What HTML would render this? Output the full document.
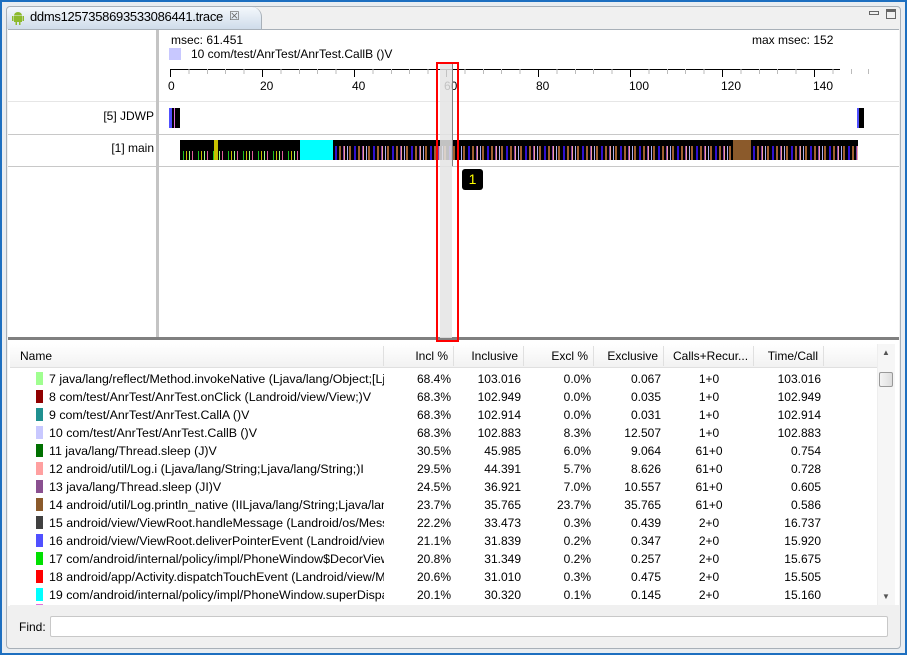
<!DOCTYPE html>
<html><head><meta charset="utf-8"><style>
*{margin:0;padding:0;box-sizing:border-box}
body{width:907px;height:655px;overflow:hidden;background:#fff;font-family:"Liberation Sans",sans-serif;font-size:12px;color:#000;position:relative}
.a{position:absolute}
.r{text-align:right}
.c{text-align:center}
</style></head><body>
<div class="a" style="left:0;top:0;width:907px;height:655px;border:2px solid #1d6fc0;background:#e9edf1"></div>
<div class="a" style="left:6px;top:6px;width:895px;height:643px;border:1px solid #a8b0b8;border-radius:4px;background:#f0f0f0"></div>
<div class="a" style="left:7px;top:7px;width:255px;height:22px;background:linear-gradient(#f4f8fc,#cfdcea);border-right:1px solid #a8b0b8;border-top-left-radius:4px;border-top-right-radius:10px"></div>
<svg class="a" style="left:10px;top:10px" width="16" height="16" viewBox="0 0 16 16"><rect x="4" y="6" width="8" height="6" fill="#8cba2c"/><path d="M4 5.5a4 3.5 0 0 1 8 0z" fill="#8cba2c"/><rect x="2" y="6" width="1.5" height="5" fill="#8cba2c"/><rect x="12.5" y="6" width="1.5" height="5" fill="#8cba2c"/><rect x="5.5" y="12" width="1.5" height="3" fill="#8cba2c"/><rect x="9" y="12" width="1.5" height="3" fill="#8cba2c"/></svg>
<div class="a" style="left:30px;top:9px;font-size:13px;letter-spacing:-0.3px">ddms1257358693533086441.trace</div>
<div class="a" style="left:229px;top:9px;font-size:12px;color:#666">☒</div>
<div class="a" style="left:869px;top:11px;width:10px;height:4px;border:1px solid #666"></div>
<div class="a" style="left:886px;top:9px;width:10px;height:10px;border:1px solid #666;border-top-width:3px"></div>
<div class="a" style="left:8px;top:29px;width:891px;height:577px;background:#fff;border-top:1px solid #a8b0b8"></div>
<div class="a" style="left:8px;top:101px;width:891px;height:1px;background:#e6e6e6"></div>
<div class="a" style="left:8px;top:134px;width:891px;height:1px;background:#c8c8c8"></div>
<div class="a" style="left:8px;top:166px;width:891px;height:1px;background:#c8c8c8"></div>
<div class="a" style="left:156px;top:30px;width:3px;height:308px;background:#c4c4c4"></div>
<div class="a" style="left:8px;top:337px;width:891px;height:3px;background:#808080"></div>
<div class="a" style="left:171px;top:33px;font-size:12px">msec: 61.451</div>
<div class="a" style="left:752px;top:33px;font-size:12px">max msec: 152</div>
<div class="a" style="left:169px;top:48px;width:12px;height:12px;background:#c8c8ff"></div>
<div class="a" style="left:191px;top:47px;font-size:12px">10 com/test/AnrTest/AnrTest.CallB ()V</div>
<div class="a" style="left:170px;top:69px;width:670px;height:1px;background:#000"></div>
<div class="a" style="left:170px;top:69px;width:672px;height:5px;background:repeating-linear-gradient(90deg,#bbb 0 1px,transparent 1px 18.4px)"></div>
<div class="a" style="left:170px;top:69px;width:680px;height:8px;background:repeating-linear-gradient(90deg,#000 0 1px,transparent 1px 92px)"></div>
<div class="a" style="left:851px;top:69px;width:1px;height:5px;background:#bbb"></div>
<div class="a" style="left:868px;top:69px;width:1px;height:5px;background:#bbb"></div>
<div class="a" style="left:168px;top:79px;font-size:12px">0</div>
<div class="a" style="left:260px;top:79px">20</div>
<div class="a" style="left:352px;top:79px">40</div>
<div class="a" style="left:444px;top:79px">60</div>
<div class="a" style="left:536px;top:79px">80</div>
<div class="a" style="left:629px;top:79px">100</div>
<div class="a" style="left:721px;top:79px">120</div>
<div class="a" style="left:813px;top:79px">140</div>
<div class="a r" style="left:20px;top:109px;width:134px">[5] JDWP</div>
<div class="a r" style="left:20px;top:141px;width:134px">[1] main</div>
<div class="a" style="left:169px;top:108px;width:11px;height:20px;background:linear-gradient(90deg,#5050ff 0 3px,#000 3px 5px,#e070e0 5px 6px,#000 6px)"></div>
<div class="a" style="left:857px;top:108px;width:7px;height:20px;background:linear-gradient(90deg,#5050ff 0 2px,#000 2px)"></div>
<div class="a" style="left:180px;top:140px;width:678px;height:20px;background:
linear-gradient(90deg,transparent 0 120px,#00ffff 120px 153px,transparent 153px 553px,#8b5a2b 553px 571px,transparent 571px),
linear-gradient(90deg,transparent 0 34px,#c8c000 34px 38px,transparent 38px),
linear-gradient(#000 0 6px,transparent 6px),
repeating-linear-gradient(90deg,#000 0 3px,#3010d0 3px 5px,#000 5px 7px,#a06030 7px 9px,#000 9px 11px,#8040a0 11px 12px,#f0a0a0 12px 13px,#000 13px 15px,#b0b0f0 15px 16px,#000 16px 17px,#a06030 17px 19px);"></div>
<div class="a" style="left:180px;top:140px;width:120px;height:20px;background:linear-gradient(90deg,transparent 0 34px,#c8c000 34px 38px,transparent 38px),linear-gradient(#000 0 11px,transparent 11px),repeating-linear-gradient(90deg,#000 0 3px,#20c020 3px 4px,#000 4px 6px,#c8c000 6px 7px,#000 7px 9px,#a0ff80 9px 10px,#000 10px 12px,#e060a0 12px 13px,#000 13px 15px)"></div>
<div class="a" style="left:440px;top:62px;width:12px;height:276px;background:#e4e4e4;opacity:.85"></div>
<div class="a" style="left:452px;top:62px;width:1px;height:104px;background:#808080"></div>
<div class="a" style="left:436px;top:62px;width:23px;height:280px;border:2px solid #f00"></div>
<div class="a c" style="left:462px;top:169px;width:21px;height:21px;background:#000;border-radius:3px;color:#ff0;font-size:14px;line-height:21px">1</div>
<div class="a" style="left:10px;top:344px;width:867px;height:24px;background:linear-gradient(#fff,#f2f2f2);border-bottom:1px solid #e0e0e0"></div>
<div class="a" style="left:20px;top:349px">Name</div>
<div class="a" style="left:383px;top:346px;width:1px;height:20px;background:#e0e0e0"></div>
<div class="a" style="left:453px;top:346px;width:1px;height:20px;background:#e0e0e0"></div>
<div class="a" style="left:523px;top:346px;width:1px;height:20px;background:#e0e0e0"></div>
<div class="a" style="left:593px;top:346px;width:1px;height:20px;background:#e0e0e0"></div>
<div class="a" style="left:663px;top:346px;width:1px;height:20px;background:#e0e0e0"></div>
<div class="a" style="left:753px;top:346px;width:1px;height:20px;background:#e0e0e0"></div>
<div class="a" style="left:823px;top:346px;width:1px;height:20px;background:#e0e0e0"></div>
<div class="a r" style="left:384px;top:349px;width:64px">Incl %</div>
<div class="a r" style="left:454px;top:349px;width:64px">Inclusive</div>
<div class="a r" style="left:524px;top:349px;width:64px">Excl %</div>
<div class="a r" style="left:594px;top:349px;width:64px">Exclusive</div>
<div class="a" style="left:673px;top:349px">Calls+Recur...</div>
<div class="a r" style="left:754px;top:349px;width:64px">Time/Call</div>
<div class="a" style="left:877px;top:344px;width:18px;height:261px;background:#f6f6f6;border-left:1px solid #eee"></div>
<div class="a" style="left:882px;top:348px;font-size:8px;color:#555">▲</div>
<div class="a" style="left:879px;top:372px;width:14px;height:15px;border:1px solid #999;background:linear-gradient(90deg,#f4f4f4,#ddd);border-radius:2px"></div>
<div class="a" style="left:882px;top:592px;font-size:8px;color:#555">▼</div>
<div id="rows"></div>
<div class="a" style="left:10px;top:605px;width:889px;height:42px;background:#f0f0f0"></div>
<div class="a" style="left:19px;top:620px;font-size:12px">Find:</div>
<div class="a" style="left:50px;top:616px;width:838px;height:21px;background:#fff;border:1px solid #c8c8c8;border-radius:2px"></div>
<script>
var d=[["#a0ff90","7 java/lang/reflect/Method.invokeNative (Ljava/lang/Object;[Lj","68.4%","103.016","0.0%","0.067","1+0","103.016"],
["#900000","8 com/test/AnrTest/AnrTest.onClick (Landroid/view/View;)V","68.3%","102.949","0.0%","0.035","1+0","102.949"],
["#209090","9 com/test/AnrTest/AnrTest.CallA ()V","68.3%","102.914","0.0%","0.031","1+0","102.914"],
["#c8c8ff","10 com/test/AnrTest/AnrTest.CallB ()V","68.3%","102.883","8.3%","12.507","1+0","102.883"],
["#007000","11 java/lang/Thread.sleep (J)V","30.5%","45.985","6.0%","9.064","61+0","0.754"],
["#ffa0a0","12 android/util/Log.i (Ljava/lang/String;Ljava/lang/String;)I","29.5%","44.391","5.7%","8.626","61+0","0.728"],
["#8a5090","13 java/lang/Thread.sleep (JI)V","24.5%","36.921","7.0%","10.557","61+0","0.605"],
["#8b5a2b","14 android/util/Log.println_native (IILjava/lang/String;Ljava/lang/Str","23.7%","35.765","23.7%","35.765","61+0","0.586"],
["#404040","15 android/view/ViewRoot.handleMessage (Landroid/os/Message;)V","22.2%","33.473","0.3%","0.439","2+0","16.737"],
["#5050ff","16 android/view/ViewRoot.deliverPointerEvent (Landroid/view/MotionEv","21.1%","31.839","0.2%","0.347","2+0","15.920"],
["#00e000","17 com/android/internal/policy/impl/PhoneWindow$DecorView","20.8%","31.349","0.2%","0.257","2+0","15.675"],
["#ff0000","18 android/app/Activity.dispatchTouchEvent (Landroid/view/MotionEv","20.6%","31.010","0.3%","0.475","2+0","15.505"],
["#00ffff","19 com/android/internal/policy/impl/PhoneWindow.superDispatch","20.1%","30.320","0.1%","0.145","2+0","15.160"]];
var h="";d.forEach(function(r,i){var y=370+i*18;
h+='<div class="a" style="left:36px;top:'+(y+2)+'px;width:7px;height:13px;background:'+r[0]+'"></div>';
h+='<div class="a" style="left:49px;top:'+y+'px;width:335px;height:18px;overflow:hidden;white-space:nowrap;line-height:18px;font-size:12.4px">'+r[1]+'</div>';
var xs=[384,454,524,594];for(var k=0;k<4;k++)h+='<div class="a r" style="left:'+xs[k]+'px;top:'+y+'px;width:67px;line-height:18px">'+r[2+k]+'</div>';
h+='<div class="a c" style="left:664px;top:'+y+'px;width:90px;line-height:18px">'+r[6]+'</div>';
h+='<div class="a r" style="left:754px;top:'+y+'px;width:67px;line-height:18px">'+r[7]+'</div>';});
h+='<div class="a" style="left:36px;top:604px;width:7px;height:2px;background:#e070e0"></div>';
document.getElementById("rows").innerHTML=h;
</script>
</body></html>
